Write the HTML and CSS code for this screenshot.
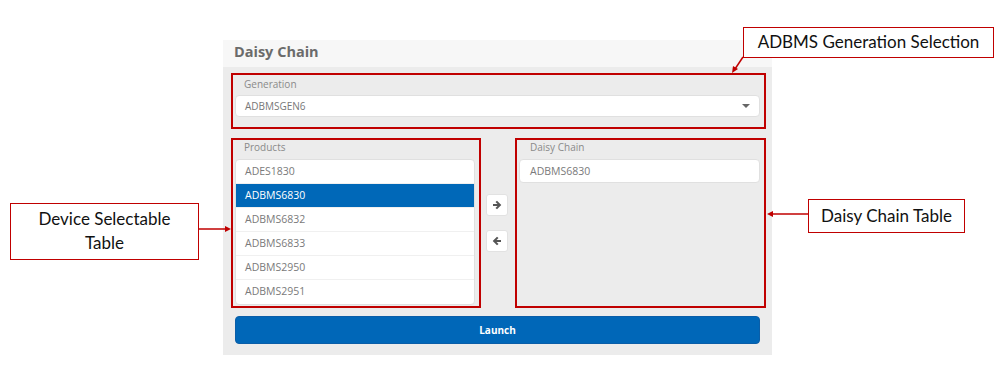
FILE: index.html
```html
<!DOCTYPE html>
<html lang="en">
<head>
    <meta charset="UTF-8">
    <meta name="viewport" content="width=device-width, initial-scale=1.0">
    <title>Daisy Chain</title>
    <link rel="stylesheet" href="styles.css">
</head>
<body>
    <div class="page">
        <div class="window">
            <div class="title">Daisy Chain</div>
            <div class="content">
                <div class="box gen-box">
                    <div class="label">Generation</div>
                    <div class="select">
                        <span>ADBMSGEN6</span>
                        <span class="caret"></span>
                    </div>
                </div>

                <div class="lists">
                    <div class="box list-box">
                        <div class="label">Products</div>
                        <ul class="list">
                            <li>ADES1830</li>
                            <li class="selected">ADBMS6830</li>
                            <li>ADBMS6832</li>
                            <li>ADBMS6833</li>
                            <li>ADBMS2950</li>
                            <li>ADBMS2951</li>
                        </ul>
                    </div>
                    <div class="moves">
                        <button class="move">
                            <svg width="10" height="10" viewBox="0 0 10 10"><path d="M1 4h4.5L3.5 2 5 .7 9.3 5 5 9.3 3.5 8l2-2H1z" fill="#555"/></svg>
                        </button>
                        <button class="move">
                            <svg width="10" height="10" viewBox="0 0 10 10"><path d="M9 4H4.5l2-2L5 .7 .7 5 5 9.3 6.5 8l-2-2H9z" fill="#555"/></svg>
                        </button>
                    </div>
                    <div class="box chain-box">
                        <div class="label">Daisy Chain</div>
                        <div class="chain-item">ADBMS6830</div>
                    </div>
                </div>

                <button class="launch">Launch</button>
            </div>
        </div>

        <!-- annotations -->
        <div class="callout callout-gen">ADBMS Generation Selection</div>
        <div class="callout callout-dev">Device Selectable<br>Table</div>
        <div class="callout callout-chain">Daisy Chain Table</div>

        <svg class="arrows" width="1007" height="370">
            <g stroke="#c00000" stroke-width="1.5" fill="none">
                <line x1="743" y1="57" x2="735" y2="69"/>
                <line x1="198" y1="229" x2="226" y2="229"/>
                <line x1="808" y1="214" x2="772" y2="214"/>
            </g>
            <g fill="#c00000">
                <polygon points="732,73 733,66 738,69"/>
                <polygon points="231,229 225,226 225,232"/>
                <polygon points="767,214 773,211 773,217"/>
            </g>
        </svg>
    </div>
</body>
</html>
```

FILE: styles.css
```css
* {
    box-sizing: border-box;
}

body {
    margin: 0;
    background-color: #fff;
    font-family: "Open Sans", "Noto Sans", sans-serif;
}

.page {
    position: relative;
    width: 1007px;
    height: 370px;
    padding-top: 40px;
}

.window {
    width: 549px;
    margin-left: 223px;
}

.title {
    height: 27px;
    line-height: 24px;
    padding-left: 11px;
    background-color: #f7f7f7;
    color: #6b6b6b;
    font-size: 14.5px;
    font-weight: bold;
}

.content {
    background-color: #ececec;
    padding: 6px 6px 11px 8px;
}

.box {
    border: 2px solid #c00000;
}

.label {
    height: 17px;
    line-height: 14px;
    padding-top: 2px;
    padding-left: 11px;
    font-size: 10px;
    color: #8a8a8a;
}

.gen-box {
    height: 56px;
}

.select {
    display: flex;
    justify-content: space-between;
    align-items: center;
    height: 22px;
    margin: 3px 4px 0 2px;
    padding: 0 9px;
    background-color: #fff;
    border: 1px solid #e0e0e0;
    border-radius: 4px;
    font-size: 10px;
    color: #777;
}

.caret {
    width: 0;
    height: 0;
    border-left: 4px solid transparent;
    border-right: 4px solid transparent;
    border-top: 4px solid #666;
}

.lists {
    display: flex;
    height: 170px;
    margin-top: 9px;
}

.list-box {
    flex: 0 0 250px;
}

.chain-box {
    flex: 0 0 251px;
}

.list-box .label,
.chain-box .label {
    height: 19px;
    padding-top: 0;
}

.chain-box .label {
    padding-left: 13px;
}

.list {
    list-style: none;
    margin: 0 4px 0 2px;
    padding: 0;
    background-color: #fff;
    border: 1px solid #e0e0e0;
    border-radius: 4px;
    overflow: hidden;
}

.list li {
    height: 24px;
    line-height: 23px;
    padding-left: 9px;
    border-bottom: 1px solid #f0f0f0;
    font-size: 10.5px;
    color: #7a7a7a;
}

.list li:last-child {
    border-bottom: none;
}

.list li.selected {
    background-color: #0068b8;
    color: #fff;
}

.moves {
    display: flex;
    flex: 0 0 34px;
    flex-direction: column;
    gap: 14px;
    padding: 56px 0 0 5px;
}

.move {
    width: 22px;
    height: 22px;
    padding: 0;
    display: flex;
    align-items: center;
    justify-content: center;
    background-color: #fff;
    border: 1px solid #e2e2e2;
    border-radius: 3px;
}

.chain-item {
    height: 24px;
    line-height: 22px;
    margin: 0 4px 0 2px;
    padding-left: 10px;
    background-color: #fff;
    border: 1px solid #e0e0e0;
    border-radius: 4px;
    font-size: 10.5px;
    color: #7a7a7a;
}

.launch {
    display: block;
    width: 525px;
    height: 28px;
    margin: 8px 0 0 4px;
    background-color: #0067b8;
    border: 1px solid #0a5ea8;
    border-radius: 4px;
    color: #fff;
    font-family: "Open Sans", sans-serif;
    font-size: 10px;
    font-weight: bold;
}

.callout {
    position: absolute;
    background-color: #fff;
    border: 1px solid #c00000;
    color: #111;
    font-family: Lato, "Liberation Sans", sans-serif;
    font-size: 17px;
    text-align: center;
}

.callout-gen {
    left: 743px;
    top: 27px;
    width: 251px;
    height: 31px;
    line-height: 28px;
}

.callout-dev {
    left: 10px;
    top: 203px;
    width: 189px;
    height: 57px;
    line-height: 24px;
    padding-top: 3px;
}

.callout-chain {
    left: 808px;
    top: 199px;
    width: 157px;
    height: 34px;
    line-height: 31px;
}

.arrows {
    position: absolute;
    left: 0;
    top: 0;
}
```
